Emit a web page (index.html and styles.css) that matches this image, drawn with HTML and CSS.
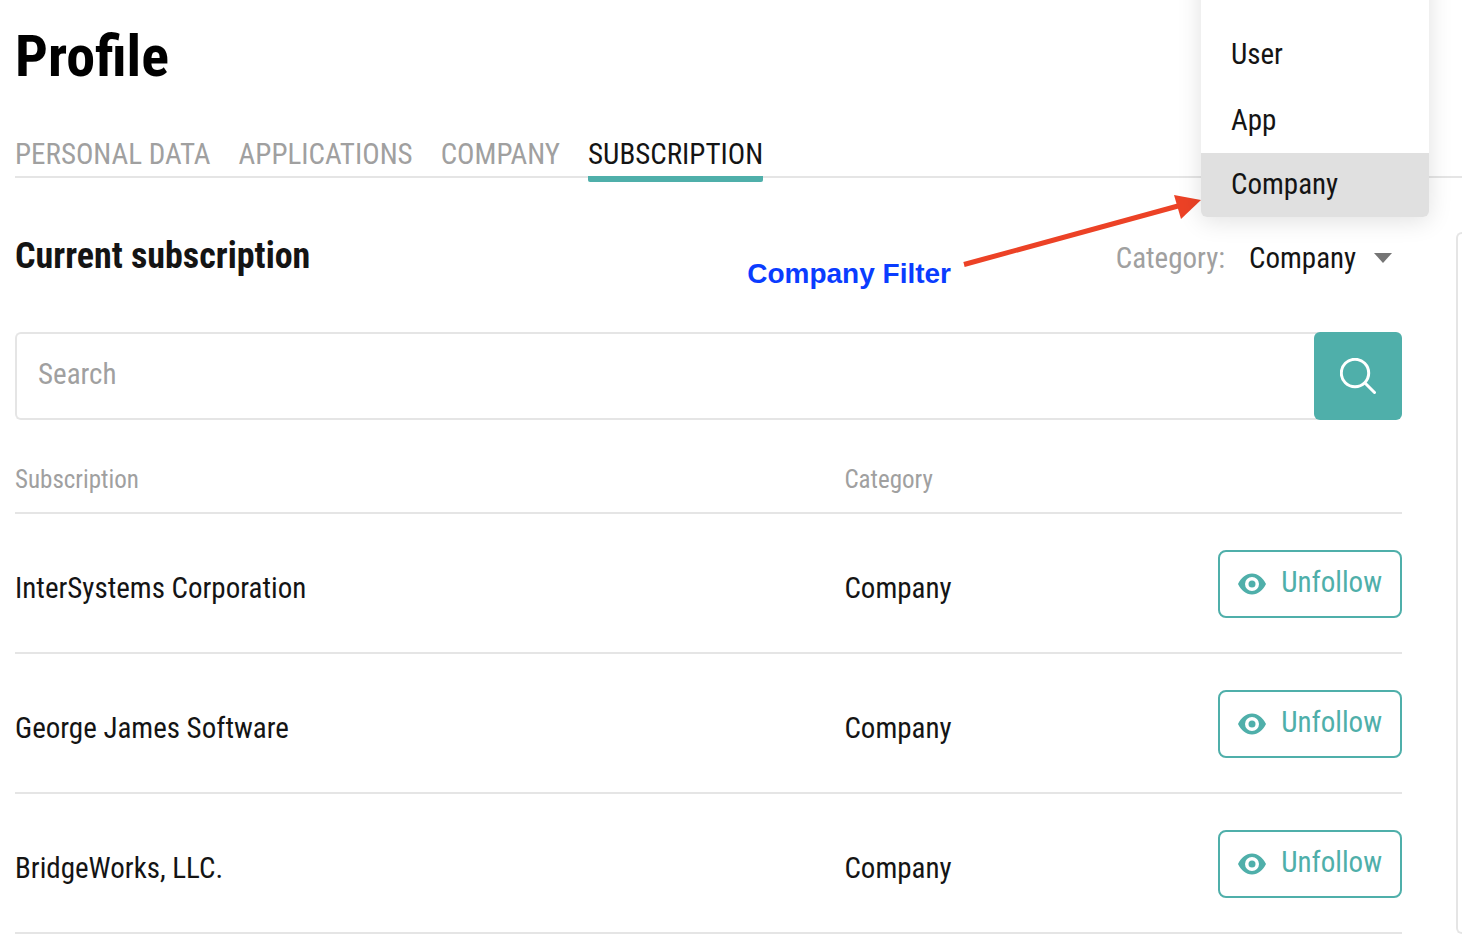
FILE: index.html
```
<!DOCTYPE html>
<html lang="en">
<head>
    <meta charset="UTF-8">
    <meta name="viewport" content="width=device-width, initial-scale=1.0">
    <title>Profile</title>
    <link rel="stylesheet" href="styles.css">
</head>
<body>
    <svg class="icon-defs" width="0" height="0" aria-hidden="true">
        <symbol id="eye" viewBox="0 0 28 22">
            <path fill-rule="evenodd" d="M14 .5C8 .5 3 5 0 11c3 6 8 10.500 14 10.500S25 17 28 11C25 5 20 .5 14 .5zm0 17.500a7 7 0 1 1 0-14 7 7 0 0 1 0 14z"/>
            <circle cx="14" cy="11" r="3.5"/>
        </symbol>
    </svg>
    <div class="page">
        <h1>Profile</h1>
        <nav class="tabs">
            <a class="tab" href="#personal">Personal data</a>
            <a class="tab" href="#applications">Applications</a>
            <a class="tab" href="#company">Company</a>
            <a class="tab active" href="#subscription">Subscription</a>
        </nav>
        <div class="content">
            <main class="subscriptions">
                <div class="heading">
                    <h2>Current subscription</h2>
                    <div class="note">
                        <span class="note-text">Company Filter</span>
                        <svg class="note-arrow" viewBox="0 0 240 76" aria-hidden="true">
                            <path d="M3 70.500L217 12" stroke="#ec4226" stroke-width="5"/>
                            <path d="M240 6l-27-5 7 24z" fill="#ec4226"/>
                        </svg>
                    </div>
                    <div class="filter">
                        <label for="category">Category:</label>
                        <div class="select">
                            <select id="category">
                                <option>User</option>
                                <option>App</option>
                                <option selected>Company</option>
                            </select>
                            <svg class="caret" viewBox="0 0 18 10" aria-hidden="true"><path d="M0 0h18l-9 10z"/></svg>
                        </div>
                        <ul class="menu" role="listbox" aria-label="Category">
                            <li class="option disabled" role="option">Choose</li>
                            <li class="option" role="option">User</li>
                            <li class="option" role="option">App</li>
                            <li class="option selected" role="option" aria-selected="true">Company</li>
                        </ul>
                    </div>
                </div>
                <form class="search">
                    <input type="text" placeholder="Search" aria-label="Search">
                    <button type="button" aria-label="Search">
                        <svg viewBox="0 0 36 36" aria-hidden="true">
                            <circle cx="15" cy="15" r="13.7"/>
                            <path d="M25 25l9.500 9.500"/>
                        </svg>
                    </button>
                </form>
                <table>
                    <thead>
                        <tr><th class="name">Subscription</th><th>Category</th><th class="action"></th></tr>
                    </thead>
                    <tbody>
                        <tr>
                            <td>InterSystems Corporation</td>
                            <td>Company</td>
                            <td class="action"><button class="unfollow"><svg aria-hidden="true"><use href="#eye"/></svg><span>Unfollow</span></button></td>
                        </tr>
                        <tr>
                            <td>George James Software</td>
                            <td>Company</td>
                            <td class="action"><button class="unfollow"><svg aria-hidden="true"><use href="#eye"/></svg><span>Unfollow</span></button></td>
                        </tr>
                        <tr>
                            <td>BridgeWorks, LLC.</td>
                            <td>Company</td>
                            <td class="action"><button class="unfollow"><svg aria-hidden="true"><use href="#eye"/></svg><span>Unfollow</span></button></td>
                        </tr>
                    </tbody>
                </table>
            </main>
            <aside class="side"></aside>
        </div>
    </div>
</body>
</html>
```
FILE: styles.css
```
* {
    box-sizing: border-box;
}
body {
    font-family: "Roboto Condensed", Roboto, sans-serif;
    font-size: 29px;
    line-height: 32px;
    color: #141414;
    background: #fff;
    margin: 0;
    overflow: hidden;
}
h1, h2, ul {
    margin: 0;
    padding: 0;
}
input, select, button {
    font: inherit;
}
.icon-defs {
    position: absolute;
}
.page {
    padding: 20px 0 0 15px;
}
h1 {
    font-size: 58px;
    line-height: 72px;
    color: #000;
}
.tabs {
    display: flex;
    gap: 28px;
    margin-top: 46px;
    border-bottom: 2px solid #e5e5e5;
}
.tab {
    height: 38px;
    color: #a0a0a0;
    text-decoration: none;
    text-transform: uppercase;
}
.tab.active {
    height: 44px;
    margin-bottom: -6px;
    color: #141414;
    border-bottom: 6px solid #4fafaa;
    border-radius: 2px;
}
.content {
    display: flex;
    gap: 54px;
    padding-top: 54px;
}
.subscriptions {
    flex: 1;
}
.heading {
    position: relative;
    display: flex;
    align-items: center;
    justify-content: space-between;
    height: 48px;
}
h2 {
    font-size: 36px;
    line-height: 48px;
}
.filter {
    display: flex;
    align-items: center;
    gap: 24px;
    padding: 4px 10px 0 0;
}
.filter label {
    color: #a0a0a0;
}
.select {
    display: flex;
    align-items: center;
    position: relative;
}
.select select {
    appearance: none;
    border: 0;
    padding: 0 35px 0 0;
    background: none;
    color: #141414;
}
.caret {
    position: absolute;
    right: 0;
    width: 18px;
    height: 10px;
    fill: #757575;
    pointer-events: none;
}
.menu {
    position: absolute;
    right: -27px;
    bottom: 63px;
    width: 228px;
    list-style: none;
    background: #fff;
    border-radius: 6px;
    box-shadow: 0 4px 24px rgba(0, 0, 0, 0.12);
    overflow: hidden;
}
.option {
    padding: 17px 30px;
}
.option.disabled {
    padding-bottom: 15px;
    color: #a0a0a0;
}
.option.selected {
    padding: 15px 30px 17px;
    background: #e0e0e0;
}
.note {
    position: absolute;
    right: 201px;
    top: -38px;
    display: flex;
    align-items: flex-end;
    gap: 10px;
}
.note-text {
    font: bold 28px/32px "Liberation Sans", Arial, sans-serif;
    color: #0a3cff;
    padding-top: 64px;
}
.note-arrow {
    width: 240px;
    height: 76px;
    align-self: flex-start;
}
.search {
    display: flex;
    margin-top: 52px;
}
.search input {
    flex: 1;
    min-width: 0;
    height: 88px;
    margin-right: -6px;
    padding: 0 21px 4px;
    border: 2px solid #e5e5e5;
    border-right: 0;
    border-radius: 6px 0 0 6px;
}
.search input::placeholder {
    color: #a0a0a0;
}
.search button {
    display: grid;
    place-items: center;
    width: 88px;
    height: 88px;
    padding: 0;
    border: 0;
    border-radius: 6px;
    background: #4fafaa;
    z-index: 1;
}
.search svg {
    width: 36px;
    height: 36px;
    fill: none;
    stroke: #fff;
    stroke-width: 3;
    stroke-linecap: round;
}
table {
    width: 100%;
    margin-top: 38px;
    border-collapse: collapse;
    table-layout: fixed;
}
th, td {
    padding: 0;
    text-align: left;
    border-bottom: 2px solid #e5e5e5;
}
th {
    height: 55px;
    padding-bottom: 10px;
    font-size: 25px;
    font-weight: normal;
    color: #a0a0a0;
}
th.name {
    width: 59.8%;
}
td {
    height: 140px;
    padding-top: 10px;
}
td.action {
    padding-top: 2px;
    text-align: right;
}
.unfollow {
    display: inline-flex;
    align-items: center;
    gap: 15px;
    height: 68px;
    padding: 0 18px;
    border: 2px solid #4fafaa;
    border-radius: 8px;
    background: #fff;
    color: #4fafaa;
}
.unfollow span {
    padding-bottom: 4px;
}
.unfollow svg {
    width: 28px;
    height: 22px;
    fill: currentColor;
}
.side {
    width: 6px;
    height: 702px;
    border: 2px solid #e5e5e5;
    border-right: 0;
    border-radius: 8px 0 0 8px;
}
```
